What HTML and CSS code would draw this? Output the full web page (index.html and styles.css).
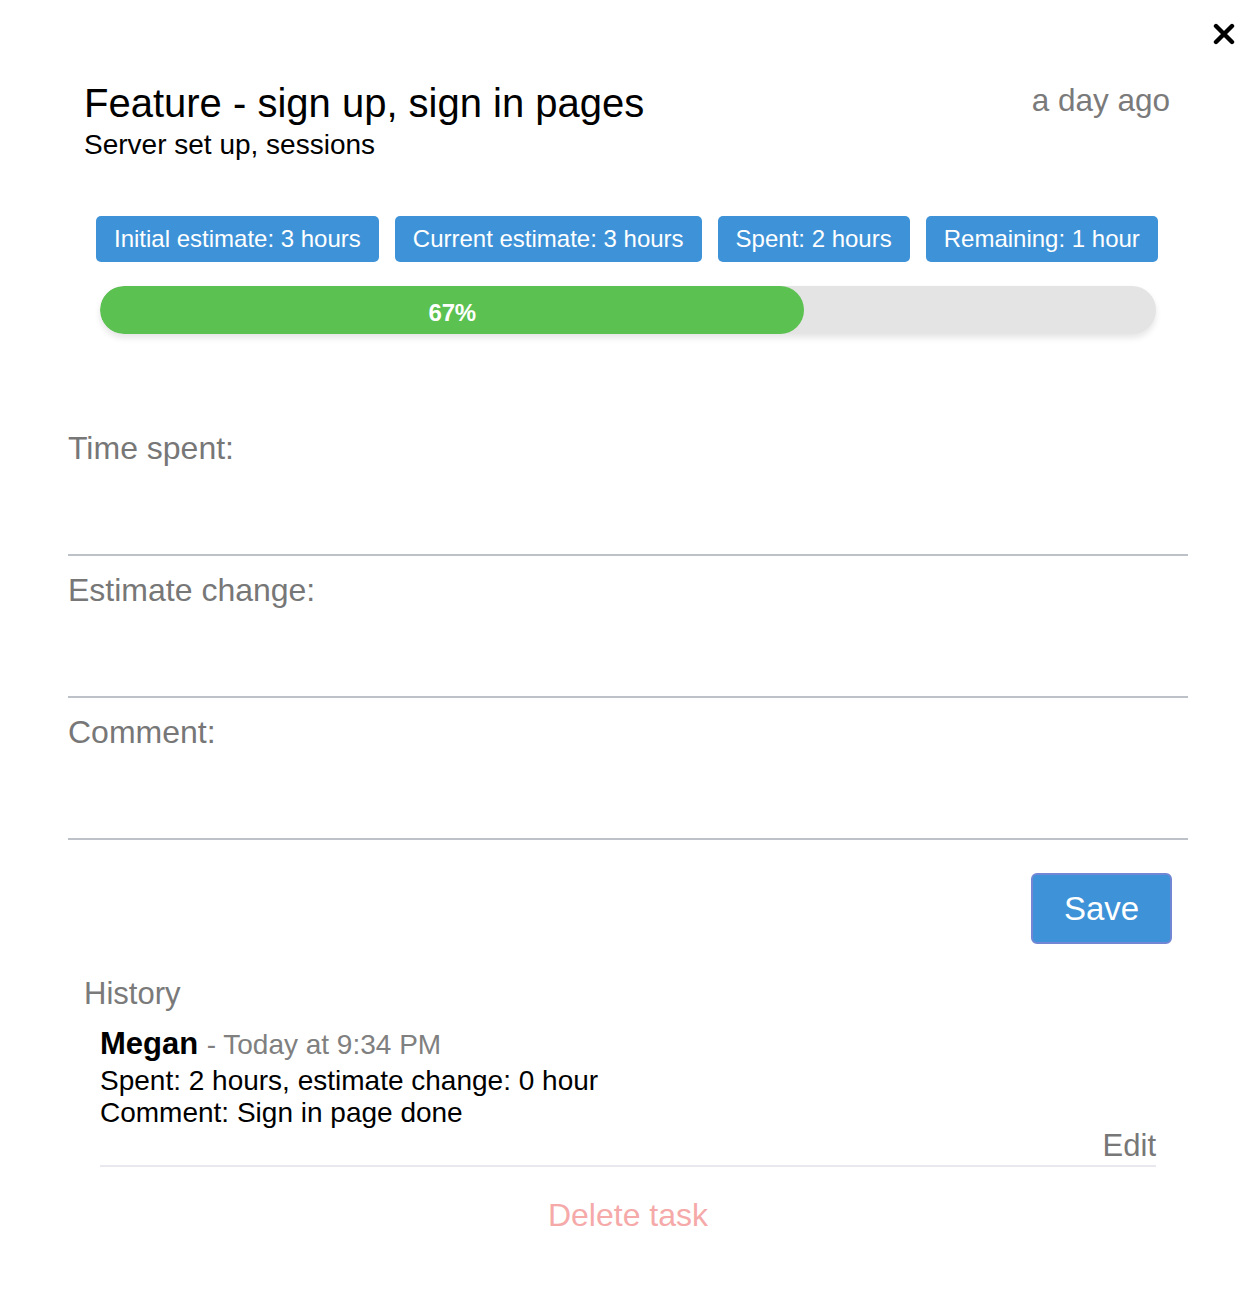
FILE: index.html
```html
<!DOCTYPE html>
<html>
<head>
<meta charset="utf-8">
<link rel="stylesheet" href="styles.css">
</head>
<body>
<div class="modal">
  <button class="close" aria-label="Close">
    <svg width="22" height="22" viewBox="0 0 22 22"><path d="M3 3 L19 19 M19 3 L3 19" stroke="#000" stroke-width="4.4" stroke-linecap="round"/></svg>
  </button>
  <header class="head">
    <div class="titles">
      <h1 class="title">Feature - sign up, sign in pages</h1>
      <div class="subtitle">Server set up, sessions</div>
    </div>
    <div class="ago">a day ago</div>
  </header>
  <div class="badges">
    <span class="badge">Initial estimate: 3 hours</span>
    <span class="badge">Current estimate: 3 hours</span>
    <span class="badge">Spent: 2 hours</span>
    <span class="badge">Remaining: 1 hour</span>
  </div>
  <div class="progress">
    <div class="fill" style="width: 66.7%">67%</div>
  </div>
  <form class="form">
    <label class="field first"><span class="label">Time spent:</span></label>
    <label class="field"><span class="label">Estimate change:</span></label>
    <label class="field"><span class="label">Comment:</span></label>
    <div class="actions"><button type="button" class="save">Save</button></div>
  </form>
  <section class="history">
    <h2 class="history-title">History</h2>
    <div class="entry">
      <div class="entry-head"><span class="who">Megan</span> <span class="when">- Today at 9:34 PM</span></div>
      <div class="entry-line">Spent: 2 hours, estimate change: 0 hour</div>
      <div class="entry-line">Comment: Sign in page done</div>
      <div class="edit-row"><span class="edit">Edit</span></div>
    </div>
  </section>
  <div class="delete-row"><span class="delete">Delete task</span></div>
</div>
</body>
</html>
```
FILE: styles.css
```css
* { box-sizing: border-box; }
html, body { margin: 0; padding: 0; background: #fff; }
body { font-family: "Liberation Sans", Arial, sans-serif; color: #000; }
.modal { position: relative; width: 1256px; min-height: 1292px; padding: 0; }
.close {
  position: absolute; top: 23px; right: 21px;
  width: 22px; height: 22px; padding: 0; border: 0; background: none;
}
.close svg { display: block; }
.head {
  display: flex; justify-content: space-between; align-items: flex-start;
  padding: 80px 86px 0 84px;
}
.title { margin: 0; font-size: 40px; font-weight: normal; line-height: 46px; }
.subtitle { font-size: 28px; line-height: 32px; margin-top: 3px; }
.ago { font-size: 31.5px; color: #7a7a7a; line-height: 40px; }
.badges {
  display: flex; gap: 16px; padding: 0 0 0 96px; margin-top: 55px;
}
.badge {
  display: inline-block; height: 46px; line-height: 46px;
  background: #3d92d8; color: #fff; border-radius: 5px;
  font-size: 24px; padding: 0 18px;
}
.progress {
  margin: 24px 0 0 100px; width: 1056px; height: 48px;
  background: #e4e4e4; border-radius: 24px;
  box-shadow: 0 4px 6px rgba(0,0,0,0.1);
  overflow: hidden;
}
.fill {
  height: 48px; background: #5bc150; border-radius: 24px;
  color: #fff; font-weight: bold; font-size: 24px; line-height: 54px;
  text-align: center; letter-spacing: -0.3px;
}
.form { margin: 89px 68px 0 68px; }
.field {
  display: block; height: 142px; border-bottom: 2px solid #bcc2c8;
}
.field.first { height: 133px; }
.label { display: block; font-size: 32px; color: #777; line-height: 40px; padding-top: 14px; }
.field.first .label { padding-top: 5px; }
.actions { display: flex; justify-content: flex-end; padding: 33px 16px 0 0; }
.save {
  width: 141px; height: 71px; background: #3d92d8; color: #fff;
  border: 2px solid #7187d6; border-radius: 6px;
  font-family: "Liberation Sans", Arial, sans-serif; font-size: 33px;
}
.history { margin: 30px 100px 0 84px; }
.history-title { margin: 0; font-weight: normal; font-size: 31px; color: #7a7a7a; line-height: 40px; }
.entry { margin: 12px 0 0 16px; border-bottom: 2px solid #e8e8ee; }
.entry-head { line-height: 32px; padding-top: 2px; }
.who { font-weight: bold; font-size: 31px; }
.when { color: #808080; font-size: 28px; margin-left: 4px; }
.entry-line { font-size: 28px; line-height: 32px; }
.edit-row { display: flex; justify-content: flex-end; line-height: 34px; padding-bottom: 2px; }
.edit { font-size: 31px; color: #777; }
.delete-row { text-align: center; margin-top: 28px; }
.delete { font-size: 32px; color: #f5aaa9; line-height: 40px; }
```
